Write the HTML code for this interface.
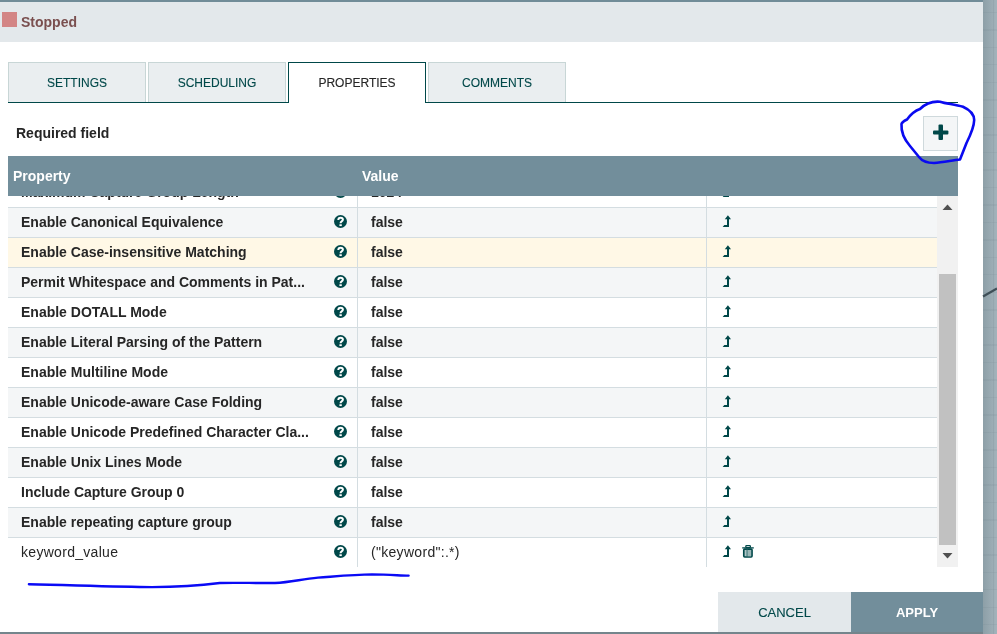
<!DOCTYPE html>
<html><head><meta charset="utf-8">
<style>
*{box-sizing:border-box;margin:0;padding:0}
html,body{width:997px;height:634px;overflow:hidden;background:#fff;font-family:"Liberation Sans",sans-serif;color:#262626}
.abs{position:absolute}
#bgr{left:983px;top:0;width:14px;height:634px;background:linear-gradient(to right,#8d9fa7,#a3b3bb)}
#bggrid{left:983px;top:0;width:14px;height:634px;background-image:repeating-linear-gradient(to bottom,transparent 0,transparent 11.8px,rgba(80,100,110,0.08) 11.8px,rgba(80,100,110,0.08) 13px,transparent 13px,transparent 17.5px);}
#bgv{left:993px;top:0;width:1px;height:634px;background:rgba(80,100,110,0.1)}
#bgb{left:0;top:632px;width:983px;height:2px;background:#74858c}
#dlg{left:0;top:0;width:983px;height:632px;background:#fff}
#topstrip{left:0;top:0;width:983px;height:2px;background:#718c98}
#hdr{left:0;top:2px;width:983px;height:40px;background:#e3e8eb}
#sq{left:2px;top:12px;width:15px;height:15px;background:#d38585}
#stopped{left:21px;top:13px;font-size:14px;font-weight:bold;color:#7a4f4f;line-height:18px}
.tab{top:62px;width:138px;height:40px;background:#eaeef0;border:1px solid #c8d6d6;border-bottom:none;font-size:12px;color:#004849;text-align:center;line-height:40px;-webkit-text-stroke:0.12px currentColor}
.tab.sel{background:#fff;border-color:#004849;color:#262626;height:41px}
#tabline{left:8px;top:102px;width:950px;height:1px;background:#004849}
#req{left:16px;top:124px;font-size:14px;font-weight:bold;line-height:18px}
#addbtn{left:923px;top:116px;width:35px;height:35px;background:#f4f6f7;border:1px solid #cfd9dc}
#thead{left:8px;top:156px;width:950px;height:40px;background:#728e9b;color:#fff;font-weight:bold;font-size:14px}
#grid{left:8px;top:196px;width:929px;height:371px;overflow:hidden}
.row{position:absolute;left:0;width:929px;height:30px;border-bottom:1px solid #d4dde1;font-size:14px}
.row.g{background:#f4f6f7}
.row.y{background:#fff8e6}
.c1{position:absolute;left:13px;top:-1px;line-height:30px;font-weight:bold;white-space:nowrap}
.c2{position:absolute;left:363px;top:-1px;line-height:30px;font-weight:bold}
.help{position:absolute;left:326px;top:7px}
.lvl{position:absolute;left:714px;top:7px}
.trash{position:absolute;left:730px;top:4px}
.vline{position:absolute;top:0;width:1px;height:371px;background:#d4dde1}
#sb{left:937px;top:196px;width:21px;height:371px;background:#f1f1f1}
#thumb{left:939px;top:274px;width:17px;height:271px;background:#c1c1c1}
#cancel{left:718px;top:592px;width:133px;height:40px;background:#e3e8eb;color:#004849;font-size:13px;text-align:center;line-height:41px;-webkit-text-stroke:0.12px currentColor}
#apply{left:851px;top:592px;width:132px;height:40px;background:#728e9b;color:#fff;font-weight:bold;font-size:13px;text-align:center;line-height:41px}
</style></head>
<body><div id="root" style="position:absolute;left:0;top:0;width:997px;height:634px;will-change:transform">
<div class="abs" id="bgr"></div><div class="abs" id="bggrid"></div><div class="abs" id="bgv"></div>
<div class="abs" id="bgb"></div>
<div class="abs" id="dlg"></div>
<div class="abs" id="topstrip"></div>
<div class="abs" id="hdr"></div>
<div class="abs" id="sq"></div>
<div class="abs" id="stopped">Stopped</div>

<div class="abs" id="tabline"></div>
<div class="abs tab" style="left:8px">SETTINGS</div>
<div class="abs tab" style="left:148px">SCHEDULING</div>
<div class="abs tab sel" style="left:288px">PROPERTIES</div>
<div class="abs tab" style="left:428px">COMMENTS</div>

<div class="abs" id="req">Required field</div>
<div class="abs" id="addbtn"><svg style="position:absolute;left:0;top:0" width="35" height="35" viewBox="0 0 35 35"><rect x="9" y="13.4" width="15.4" height="4" rx="1" fill="#004849"/><rect x="14.5" y="7.5" width="4.5" height="15.5" rx="1" fill="#004849"/></svg></div>

<div class="abs" id="grid">
<div class="row" style="top:-18px"><span class="c1" style="">Maximum Capture Group Length</span><svg class="help" width="13" height="13" viewBox="0 0 13 13"><circle cx="6.5" cy="6.5" r="6.5" fill="#004849"/><path d="M4.3 5.1C4.3 3.5 5.3 2.7 6.6 2.7C8 2.7 8.9 3.5 8.9 4.6C8.9 5.7 8.1 6.1 7.4 6.6C6.9 6.9 6.6 7.3 6.6 8.2" stroke="#fff" stroke-width="2" fill="none"/><rect x="5.4" y="9.3" width="2.4" height="1.8" fill="#fff"/></svg><span class="c2" style="">1024</span><svg class="lvl" width="10" height="13" viewBox="0 0 10 13"><path d="M5.9 0.2L9 4.2L7 4.2L7 12L0.7 12L2.3 10L5 10L5 4.2L2.8 4.2Z" fill="#004849"/></svg></div>
<div class="row g" style="top:12px"><span class="c1" style="">Enable Canonical Equivalence</span><svg class="help" width="13" height="13" viewBox="0 0 13 13"><circle cx="6.5" cy="6.5" r="6.5" fill="#004849"/><path d="M4.3 5.1C4.3 3.5 5.3 2.7 6.6 2.7C8 2.7 8.9 3.5 8.9 4.6C8.9 5.7 8.1 6.1 7.4 6.6C6.9 6.9 6.6 7.3 6.6 8.2" stroke="#fff" stroke-width="2" fill="none"/><rect x="5.4" y="9.3" width="2.4" height="1.8" fill="#fff"/></svg><span class="c2" style="">false</span><svg class="lvl" width="10" height="13" viewBox="0 0 10 13"><path d="M5.9 0.2L9 4.2L7 4.2L7 12L0.7 12L2.3 10L5 10L5 4.2L2.8 4.2Z" fill="#004849"/></svg></div>
<div class="row y" style="top:42px"><span class="c1" style="">Enable Case-insensitive Matching</span><svg class="help" width="13" height="13" viewBox="0 0 13 13"><circle cx="6.5" cy="6.5" r="6.5" fill="#004849"/><path d="M4.3 5.1C4.3 3.5 5.3 2.7 6.6 2.7C8 2.7 8.9 3.5 8.9 4.6C8.9 5.7 8.1 6.1 7.4 6.6C6.9 6.9 6.6 7.3 6.6 8.2" stroke="#fff" stroke-width="2" fill="none"/><rect x="5.4" y="9.3" width="2.4" height="1.8" fill="#fff"/></svg><span class="c2" style="">false</span><svg class="lvl" width="10" height="13" viewBox="0 0 10 13"><path d="M5.9 0.2L9 4.2L7 4.2L7 12L0.7 12L2.3 10L5 10L5 4.2L2.8 4.2Z" fill="#004849"/></svg></div>
<div class="row g" style="top:72px"><span class="c1" style="">Permit Whitespace and Comments in Pat...</span><svg class="help" width="13" height="13" viewBox="0 0 13 13"><circle cx="6.5" cy="6.5" r="6.5" fill="#004849"/><path d="M4.3 5.1C4.3 3.5 5.3 2.7 6.6 2.7C8 2.7 8.9 3.5 8.9 4.6C8.9 5.7 8.1 6.1 7.4 6.6C6.9 6.9 6.6 7.3 6.6 8.2" stroke="#fff" stroke-width="2" fill="none"/><rect x="5.4" y="9.3" width="2.4" height="1.8" fill="#fff"/></svg><span class="c2" style="">false</span><svg class="lvl" width="10" height="13" viewBox="0 0 10 13"><path d="M5.9 0.2L9 4.2L7 4.2L7 12L0.7 12L2.3 10L5 10L5 4.2L2.8 4.2Z" fill="#004849"/></svg></div>
<div class="row" style="top:102px"><span class="c1" style="">Enable DOTALL Mode</span><svg class="help" width="13" height="13" viewBox="0 0 13 13"><circle cx="6.5" cy="6.5" r="6.5" fill="#004849"/><path d="M4.3 5.1C4.3 3.5 5.3 2.7 6.6 2.7C8 2.7 8.9 3.5 8.9 4.6C8.9 5.7 8.1 6.1 7.4 6.6C6.9 6.9 6.6 7.3 6.6 8.2" stroke="#fff" stroke-width="2" fill="none"/><rect x="5.4" y="9.3" width="2.4" height="1.8" fill="#fff"/></svg><span class="c2" style="">false</span><svg class="lvl" width="10" height="13" viewBox="0 0 10 13"><path d="M5.9 0.2L9 4.2L7 4.2L7 12L0.7 12L2.3 10L5 10L5 4.2L2.8 4.2Z" fill="#004849"/></svg></div>
<div class="row g" style="top:132px"><span class="c1" style="">Enable Literal Parsing of the Pattern</span><svg class="help" width="13" height="13" viewBox="0 0 13 13"><circle cx="6.5" cy="6.5" r="6.5" fill="#004849"/><path d="M4.3 5.1C4.3 3.5 5.3 2.7 6.6 2.7C8 2.7 8.9 3.5 8.9 4.6C8.9 5.7 8.1 6.1 7.4 6.6C6.9 6.9 6.6 7.3 6.6 8.2" stroke="#fff" stroke-width="2" fill="none"/><rect x="5.4" y="9.3" width="2.4" height="1.8" fill="#fff"/></svg><span class="c2" style="">false</span><svg class="lvl" width="10" height="13" viewBox="0 0 10 13"><path d="M5.9 0.2L9 4.2L7 4.2L7 12L0.7 12L2.3 10L5 10L5 4.2L2.8 4.2Z" fill="#004849"/></svg></div>
<div class="row" style="top:162px"><span class="c1" style="">Enable Multiline Mode</span><svg class="help" width="13" height="13" viewBox="0 0 13 13"><circle cx="6.5" cy="6.5" r="6.5" fill="#004849"/><path d="M4.3 5.1C4.3 3.5 5.3 2.7 6.6 2.7C8 2.7 8.9 3.5 8.9 4.6C8.9 5.7 8.1 6.1 7.4 6.6C6.9 6.9 6.6 7.3 6.6 8.2" stroke="#fff" stroke-width="2" fill="none"/><rect x="5.4" y="9.3" width="2.4" height="1.8" fill="#fff"/></svg><span class="c2" style="">false</span><svg class="lvl" width="10" height="13" viewBox="0 0 10 13"><path d="M5.9 0.2L9 4.2L7 4.2L7 12L0.7 12L2.3 10L5 10L5 4.2L2.8 4.2Z" fill="#004849"/></svg></div>
<div class="row g" style="top:192px"><span class="c1" style="">Enable Unicode-aware Case Folding</span><svg class="help" width="13" height="13" viewBox="0 0 13 13"><circle cx="6.5" cy="6.5" r="6.5" fill="#004849"/><path d="M4.3 5.1C4.3 3.5 5.3 2.7 6.6 2.7C8 2.7 8.9 3.5 8.9 4.6C8.9 5.7 8.1 6.1 7.4 6.6C6.9 6.9 6.6 7.3 6.6 8.2" stroke="#fff" stroke-width="2" fill="none"/><rect x="5.4" y="9.3" width="2.4" height="1.8" fill="#fff"/></svg><span class="c2" style="">false</span><svg class="lvl" width="10" height="13" viewBox="0 0 10 13"><path d="M5.9 0.2L9 4.2L7 4.2L7 12L0.7 12L2.3 10L5 10L5 4.2L2.8 4.2Z" fill="#004849"/></svg></div>
<div class="row" style="top:222px"><span class="c1" style="">Enable Unicode Predefined Character Cla...</span><svg class="help" width="13" height="13" viewBox="0 0 13 13"><circle cx="6.5" cy="6.5" r="6.5" fill="#004849"/><path d="M4.3 5.1C4.3 3.5 5.3 2.7 6.6 2.7C8 2.7 8.9 3.5 8.9 4.6C8.9 5.7 8.1 6.1 7.4 6.6C6.9 6.9 6.6 7.3 6.6 8.2" stroke="#fff" stroke-width="2" fill="none"/><rect x="5.4" y="9.3" width="2.4" height="1.8" fill="#fff"/></svg><span class="c2" style="">false</span><svg class="lvl" width="10" height="13" viewBox="0 0 10 13"><path d="M5.9 0.2L9 4.2L7 4.2L7 12L0.7 12L2.3 10L5 10L5 4.2L2.8 4.2Z" fill="#004849"/></svg></div>
<div class="row g" style="top:252px"><span class="c1" style="">Enable Unix Lines Mode</span><svg class="help" width="13" height="13" viewBox="0 0 13 13"><circle cx="6.5" cy="6.5" r="6.5" fill="#004849"/><path d="M4.3 5.1C4.3 3.5 5.3 2.7 6.6 2.7C8 2.7 8.9 3.5 8.9 4.6C8.9 5.7 8.1 6.1 7.4 6.6C6.9 6.9 6.6 7.3 6.6 8.2" stroke="#fff" stroke-width="2" fill="none"/><rect x="5.4" y="9.3" width="2.4" height="1.8" fill="#fff"/></svg><span class="c2" style="">false</span><svg class="lvl" width="10" height="13" viewBox="0 0 10 13"><path d="M5.9 0.2L9 4.2L7 4.2L7 12L0.7 12L2.3 10L5 10L5 4.2L2.8 4.2Z" fill="#004849"/></svg></div>
<div class="row" style="top:282px"><span class="c1" style="">Include Capture Group 0</span><svg class="help" width="13" height="13" viewBox="0 0 13 13"><circle cx="6.5" cy="6.5" r="6.5" fill="#004849"/><path d="M4.3 5.1C4.3 3.5 5.3 2.7 6.6 2.7C8 2.7 8.9 3.5 8.9 4.6C8.9 5.7 8.1 6.1 7.4 6.6C6.9 6.9 6.6 7.3 6.6 8.2" stroke="#fff" stroke-width="2" fill="none"/><rect x="5.4" y="9.3" width="2.4" height="1.8" fill="#fff"/></svg><span class="c2" style="">false</span><svg class="lvl" width="10" height="13" viewBox="0 0 10 13"><path d="M5.9 0.2L9 4.2L7 4.2L7 12L0.7 12L2.3 10L5 10L5 4.2L2.8 4.2Z" fill="#004849"/></svg></div>
<div class="row g" style="top:312px"><span class="c1" style="">Enable repeating capture group</span><svg class="help" width="13" height="13" viewBox="0 0 13 13"><circle cx="6.5" cy="6.5" r="6.5" fill="#004849"/><path d="M4.3 5.1C4.3 3.5 5.3 2.7 6.6 2.7C8 2.7 8.9 3.5 8.9 4.6C8.9 5.7 8.1 6.1 7.4 6.6C6.9 6.9 6.6 7.3 6.6 8.2" stroke="#fff" stroke-width="2" fill="none"/><rect x="5.4" y="9.3" width="2.4" height="1.8" fill="#fff"/></svg><span class="c2" style="">false</span><svg class="lvl" width="10" height="13" viewBox="0 0 10 13"><path d="M5.9 0.2L9 4.2L7 4.2L7 12L0.7 12L2.3 10L5 10L5 4.2L2.8 4.2Z" fill="#004849"/></svg></div>
<div class="row" style="top:342px"><span class="c1" style="font-weight:normal;letter-spacing:0.3px">keyword_value</span><svg class="help" width="13" height="13" viewBox="0 0 13 13"><circle cx="6.5" cy="6.5" r="6.5" fill="#004849"/><path d="M4.3 5.1C4.3 3.5 5.3 2.7 6.6 2.7C8 2.7 8.9 3.5 8.9 4.6C8.9 5.7 8.1 6.1 7.4 6.6C6.9 6.9 6.6 7.3 6.6 8.2" stroke="#fff" stroke-width="2" fill="none"/><rect x="5.4" y="9.3" width="2.4" height="1.8" fill="#fff"/></svg><span class="c2" style="font-weight:normal;letter-spacing:0.3px">("keyword":.*)</span><svg class="lvl" width="10" height="13" viewBox="0 0 10 13"><path d="M5.9 0.2L9 4.2L7 4.2L7 12L0.7 12L2.3 10L5 10L5 4.2L2.8 4.2Z" fill="#004849"/></svg><svg class="trash" width="20" height="20" viewBox="0 0 20 20"><rect x="4.2" y="5" width="11.6" height="1.7" fill="#3f7677"/><rect x="7.8" y="3.6" width="4.6" height="2" rx="0.8" stroke="#004849" stroke-width="1.3" fill="none"/><rect x="5.8" y="7.2" width="8.2" height="7.8" rx="0.9" stroke="#004849" stroke-width="1.7" fill="#c3d4d4"/><path d="M8.3 7.5V14.2M9.5 7.5V14.2" stroke="#3a7474" stroke-width="0.7"/><rect x="9.9" y="8" width="3.2" height="6.2" fill="#9ab6b6"/></svg></div>
<div class="vline" style="left:349px"></div><div class="vline" style="left:698px"></div>
</div>
<div class="abs" id="thead"><span class="abs" style="left:5px;top:11px;line-height:18px">Property</span><span class="abs" style="left:354px;top:11px;line-height:18px">Value</span></div>
<div class="abs" id="sb"></div>
<div class="abs" id="thumb"></div>
<svg class="abs" style="left:937px;top:196px" width="21" height="371" viewBox="0 0 21 371"><path d="M5.5 14L10.5 8.5L15.5 14Z" fill="#505050"/><path d="M5.5 357L10.5 362.5L15.5 357Z" fill="#505050"/></svg>

<div class="abs" id="cancel">CANCEL</div>
<div class="abs" id="apply">APPLY</div>
<svg class="abs" style="left:0;top:0;pointer-events:none" width="997" height="634" viewBox="0 0 997 634">
<path d="M983 296.5L997 288.4" stroke="#3f4f57" stroke-width="2.2" fill="none"/>
<path d="M901.5 124C901 131 904 139 910 146L919 157C922 161 927 163 934 163C943 162 952 160.5 960 159.5L966.5 143C970 136 974 128 974.2 120C974 114 970 110 963 106.8C955 104 947 104 940 101.7C932 101 926 103 920 109C914 111 911 114 907 119.5C904 121 902 122 901.5 124Z" stroke="#0a0af0" stroke-width="2.6" fill="none" stroke-linejoin="round"/>
<path d="M28.9 584.3C80 585.5 120 587 152 587.1C180 587 200 585.5 219.8 583C235 582.5 255 583.2 275 583C290 582.5 300 579.5 318 577.6C340 576 355 574.6 372 574.4C390 574.6 400 575.5 408.6 575.6" stroke="#0a0af5" stroke-width="2.4" fill="none" stroke-linecap="round"/>
</svg>
</div></body></html>
